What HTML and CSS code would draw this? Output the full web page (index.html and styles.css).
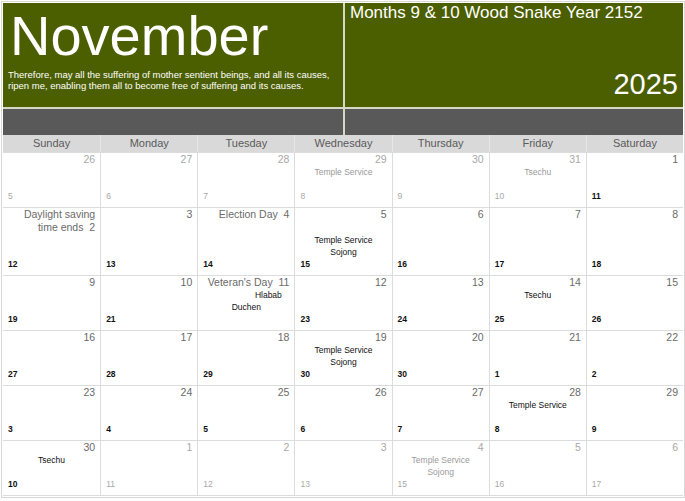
FILE: index.html
```html
<!DOCTYPE html>
<html lang="en">
<head>
<meta charset="utf-8">
<title>November 2025</title>
<link rel="stylesheet" href="styles.css">
</head>
<body>
<div class="cal">
  <header class="head">
    <div class="panel panel-left">
      <h1 class="month">November</h1>
      <p class="quote">Therefore, may all the suffering of mother sentient beings, and all its causes, ripen me, enabling them all to become free of suffering and its causes.</p>
    </div>
    <div class="panel panel-right">
      <div class="tib">Months 9 &amp; 10 Wood Snake Year 2152</div>
      <div class="year">2025</div>
    </div>
    <div class="band"></div>
    <div class="band"></div>
  </header>

  <div class="days">
    <div>Sunday</div><div>Monday</div><div>Tuesday</div><div>Wednesday</div><div>Thursday</div><div>Friday</div><div>Saturday</div>
  </div>

  <div class="weeks">
    <!-- week 1 -->
    <div class="week">
      <div class="d out">26</div><div class="d out">27</div><div class="d out">28</div><div class="d out">29</div><div class="d out">30</div><div class="d out">31</div><div class="d">1</div>
      <div class="e"></div><div class="e"></div><div class="e"></div><div class="e out">Temple Service</div><div class="e"></div><div class="e out">Tsechu</div><div class="e"></div>
      <div class="l out">5</div><div class="l out">6</div><div class="l out">7</div><div class="l out">8</div><div class="l out">9</div><div class="l out">10</div><div class="l">11</div>
    </div>
    <!-- week 2 -->
    <div class="week">
      <div class="d">Daylight saving time ends&nbsp;&nbsp;2</div><div class="d">3</div><div class="d">Election Day&nbsp;&nbsp;4</div><div class="d">5</div><div class="d">6</div><div class="d">7</div><div class="d">8</div>
      <div class="e"></div><div class="e"></div><div class="e"></div><div class="e">Temple Service<br>Sojong</div><div class="e"></div><div class="e"></div><div class="e"></div>
      <div class="l">12</div><div class="l">13</div><div class="l">14</div><div class="l">15</div><div class="l">16</div><div class="l">17</div><div class="l">18</div>
    </div>
    <!-- week 3 -->
    <div class="week">
      <div class="d">9</div><div class="d">10</div><div class="d">Veteran's Day&nbsp;&nbsp;11</div><div class="d">12</div><div class="d">13</div><div class="d">14</div><div class="d">15</div>
      <div class="e"></div><div class="e"></div><div class="e"><span class="shift">Hlabab</span><br>Duchen</div><div class="e"></div><div class="e"></div><div class="e">Tsechu</div><div class="e"></div>
      <div class="l">19</div><div class="l">21</div><div class="l"></div><div class="l">23</div><div class="l">24</div><div class="l">25</div><div class="l">26</div>
    </div>
    <!-- week 4 -->
    <div class="week">
      <div class="d">16</div><div class="d">17</div><div class="d">18</div><div class="d">19</div><div class="d">20</div><div class="d">21</div><div class="d">22</div>
      <div class="e"></div><div class="e"></div><div class="e"></div><div class="e">Temple Service<br>Sojong</div><div class="e"></div><div class="e"></div><div class="e"></div>
      <div class="l">27</div><div class="l">28</div><div class="l">29</div><div class="l">30</div><div class="l">30</div><div class="l">1</div><div class="l">2</div>
    </div>
    <!-- week 5 -->
    <div class="week">
      <div class="d">23</div><div class="d">24</div><div class="d">25</div><div class="d">26</div><div class="d">27</div><div class="d">28</div><div class="d">29</div>
      <div class="e"></div><div class="e"></div><div class="e"></div><div class="e"></div><div class="e"></div><div class="e">Temple Service</div><div class="e"></div>
      <div class="l">3</div><div class="l">4</div><div class="l">5</div><div class="l">6</div><div class="l">7</div><div class="l">8</div><div class="l">9</div>
    </div>
    <!-- week 6 -->
    <div class="week">
      <div class="d">30</div><div class="d out">1</div><div class="d out">2</div><div class="d out">3</div><div class="d out">4</div><div class="d out">5</div><div class="d out">6</div>
      <div class="e">Tsechu</div><div class="e"></div><div class="e"></div><div class="e"></div><div class="e out">Temple Service<br>Sojong</div><div class="e"></div><div class="e"></div>
      <div class="l">10</div><div class="l out">11</div><div class="l out">12</div><div class="l out">13</div><div class="l out">15</div><div class="l out">16</div><div class="l out">17</div>
    </div>
  </div>
</div>
</body>
</html>
```

FILE: styles.css
```css
* { box-sizing: border-box; }

html, body {
  margin: 0;
  padding: 0;
  background: #ffffff;
}

body {
  font-family: "Liberation Sans", Arial, sans-serif;
}

.cal {
  width: 684px;
  margin: 1px 0 0 1px;
  border: 1px solid #d8d8d8;
  padding: 1px;
}

/* ---------- header ---------- */
.head {
  display: grid;
  grid-template-columns: 340px 1fr;
  grid-template-rows: 104px 26px;
  column-gap: 2px;
  row-gap: 2px;
  background: #d6d8c6;
}

.panel {
  background: #4b5e00;
  color: #ffffff;
}

.panel-left {
  padding: 5px 6px 0 5px;
}

.month {
  margin: 0 0 5px 2px;
  font-size: 56px;
  line-height: 56px;
  font-weight: normal;
}

.quote {
  margin: 0;
  font-size: 9.5px;
  line-height: 11px;
}

.panel-right {
  display: flex;
  flex-direction: column;
  justify-content: space-between;
  padding: 0 5px 6px 5px;
}

.tib {
  font-size: 17px;
  line-height: 20px;
}

.year {
  font-size: 29px;
  line-height: 33px;
  text-align: right;
}

.band {
  background: #595959;
}

/* ---------- day names ---------- */
.days {
  display: grid;
  grid-template-columns: repeat(7, 1fr);
  background: #d9d9d9;
  color: #5a5a5a;
  font-size: 11px;
  line-height: 17px;
  text-align: center;
}

.days > div + div {
  border-left: 1px solid #e6e6e6;
}

/* ---------- weeks ---------- */
.weeks {
  border-top: 1px solid #dcdcdc;
}

.week {
  display: grid;
  grid-template-columns: repeat(7, 1fr);
  grid-template-rows: auto minmax(24px, auto) auto;
  border-bottom: 1px solid #dcdcdc;
}

.week > div:not(:nth-child(7n+1)) {
  border-left: 1px solid #dcdcdc;
}

.d {
  padding: 0 5px 0 2px;
  font-size: 10.5px;
  line-height: 13px;
  color: #6a6a6a;
  text-align: right;
}

.d.out {
  color: #a8a8a8;
}

.e {
  font-size: 8.5px;
  line-height: 12px;
  color: #111111;
  text-align: center;
}

.e.out {
  color: #9a9a9a;
}

.shift {
  padding-left: 44px;
}

.l {
  padding: 0 0 5px 5px;
  font-size: 8.5px;
  line-height: 12px;
  font-weight: bold;
  color: #111111;
}

.l.out {
  font-weight: normal;
  color: #a8a8a8;
}
```
